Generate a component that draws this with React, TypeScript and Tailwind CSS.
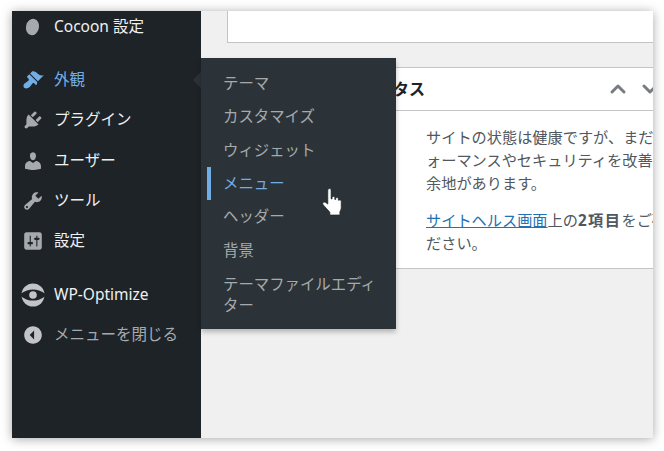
import { ChevronDown, ChevronUp } from 'lucide-react';

const font = { fontFamily: '"Noto Sans", "Noto Sans CJK JP", sans-serif' };

const paths = {
  brush:
    'M14.48 11.06L7.41 3.99l1.5-1.5c.5-.56 2.3-.47 3.51.32 1.21.8 1.43 1.28 2.91 2.1 1.18.64 2.45 1.26 4.45.85zm-.71.71L6.7 4.7 4.93 6.47c-.39.39-.39 1.02 0 1.41l1.06 1.06c.39.39.39 1.03 0 1.42-.6.6-1.43 1.11-2.21 1.69-.35.26-.7.53-1.01.84C1.43 13.23.78 15.78 2 17s3.77.57 5.12-.77c.31-.31.58-.66.84-1.01.58-.78 1.09-1.61 1.69-2.21.39-.39 1.03-.39 1.42 0l1.06 1.06c.39.39 1.02.39 1.41 0z',
  plugin:
    'M13.11 4.36L9.87 7.6 8 5.73l3.24-3.24c.35-.34 1.05-.2 1.56.32.52.51.66 1.21.31 1.55zm-8 1.77l.91-1.12 9.01 9.01-1.19.84c-.71.71-2.63 1.16-3.82 1.16H6.14L4.9 17.26c-.59.59-1.54.59-2.12 0-.59-.58-.59-1.53 0-2.12l1.24-1.24v-3.88c0-1.13.4-3.19 1.09-3.89zm7.26 3.97l3.24-3.24c.34-.35 1.04-.21 1.55.31.52.51.66 1.21.31 1.55l-3.24 3.25z',
  user:
    'M10 9.25c-2.27 0-2.73-3.44-2.73-3.44C7 4.02 7.82 2 9.97 2c2.16 0 2.98 2.02 2.71 3.81 0 0-.41 3.44-2.68 3.44zm0 2.57L12.72 10c2.39 0 4.52 2.33 4.52 4.53v2.49s-3.65 1.13-7.24 1.13c-3.65 0-7.24-1.13-7.24-1.13v-2.49c0-2.25 1.94-4.48 4.47-4.48z',
  tool:
    'M16.68 9.77c-1.34 1.34-3.3 1.67-4.95.99l-5.41 6.52c-.99.99-2.59.99-3.58 0s-.99-2.59 0-3.57l6.52-5.42c-.68-1.65-.35-3.61.99-4.95 1.28-1.28 3.12-1.62 4.72-1.06l-2.89 2.89 2.82 2.82 2.86-2.87c.53 1.58.18 3.39-1.08 4.65zM3.81 16.21c.4.39 1.04.39 1.43 0 .4-.4.4-1.04 0-1.43-.39-.4-1.03-.4-1.43 0-.39.39-.39 1.03 0 1.43z',
  settings:
    'M18 16V4c0-1.1-.9-2-2-2H4c-1.1 0-2 .9-2 2v12c0 1.1.9 2 2 2h12c1.1 0 2-.9 2-2zM8 11h1c.55 0 1 .45 1 1s-.45 1-1 1H8v1.5c0 .28-.22.5-.5.5s-.5-.22-.5-.5V13H6c-.55 0-1-.45-1-1s.45-1 1-1h1V5.5c0-.28.22-.5.5-.5s.5.22.5.5V11zm5-2h-1c-.55 0-1-.45-1-1s.45-1 1-1h1V5.5c0-.28.22-.5.5-.5s.5.22.5.5V7h1c.55 0 1 .45 1 1s-.45 1-1 1h-1v5.5c0 .28-.22.5-.5.5s-.5-.22-.5-.5V9z',
  collapse: 'M10 2.01c4.42 0 8 3.58 8 8s-3.58 8-8 8-8-3.58-8-8 3.58-8 8-8zm1 4v8l-4-4z',
};

const DashIcon = ({ d, className }: { d: string; className: string }) => (
  <svg viewBox="0 0 20 20" className={`h-[22px] w-[22px] ${className}`} fill="currentColor" fillRule="evenodd">
    <path d={d} />
  </svg>
);

const OptimizeIcon = () => (
  <svg viewBox="0 0 24 24" className="h-[24px] w-[24px] text-[#c3c4c7]" fill="currentColor">
    <circle cx="12" cy="12" r="11.500" />
    <path d="M-1 11.300 Q 12 1.500 25 11.300 L 25 12.700 Q 12 22.500 -1 12.700 Z" fill="#1d2327" />
    <circle cx="12" cy="12" r="3.800" />
  </svg>
);

const MarkerIcon = () => (
  <svg viewBox="0 0 22 22" className="h-[22px] w-[22px] text-[#a7aaad]" fill="currentColor">
    <ellipse cx="10.500" cy="11" rx="6.500" ry="8.300" transform="rotate(12 10.500 11)" />
  </svg>
);

const MenuRow = ({
  icon,
  label,
  className = 'text-[#f0f0f1]',
}: {
  icon: React.ReactNode;
  label: string;
  className?: string;
}) => (
  <div className={`flex h-10 items-center text-[15.5px] ${className}`}>
    <div className="flex w-[42px] justify-center">{icon}</div>
    <span className="whitespace-nowrap">{label}</span>
  </div>
);

const subItems = ['テーマ', 'カスタマイズ', 'ウィジェット', 'メニュー', 'ヘッダー', '背景'];

export default function App() {
  return (
    <div className="h-[451px] w-[664px] overflow-hidden bg-white pl-3 pt-[11px]" style={font}>
      <div className="relative flex h-[427px] w-[641px] bg-[#f0f0f1] shadow-[0_1px_10px_rgba(0,0,0,0.35)]">
        {/* Sidebar */}
        <div className="flex w-[189px] flex-col bg-[#1d2327]">
          <div className="-mt-1 mb-[13px]">
            <MenuRow icon={<MarkerIcon />} label="Cocoon 設定" />
          </div>
          <MenuRow icon={<DashIcon d={paths.brush} className="text-[#72aee6]" />} label="外観" className="text-[#72aee6]" />
          <MenuRow icon={<DashIcon d={paths.plugin} className="text-[#a7aaad]" />} label="プラグイン" />
          <div className="mt-px">
            <MenuRow icon={<DashIcon d={paths.user} className="text-[#a7aaad]" />} label="ユーザー" />
          </div>
          <MenuRow icon={<DashIcon d={paths.tool} className="text-[#a7aaad]" />} label="ツール" />
          <MenuRow icon={<DashIcon d={paths.settings} className="text-[#a7aaad]" />} label="設定" />
          <div className="mt-[14px]">
            <MenuRow icon={<OptimizeIcon />} label="WP-Optimize" />
          </div>
          <MenuRow icon={<DashIcon d={paths.collapse} className="text-[#c3c4c7]" />} label="メニューを閉じる" className="text-[#a7aaad]" />
        </div>

        {/* Content */}
        <div className="min-w-0 flex-1 overflow-hidden pl-[26px]">
          <div className="h-[32px] w-[480px] border-x border-b border-[#c3c4c7] bg-white" />
          <div className="mt-[24px] w-[480px] border border-[#c3c4c7] bg-white">
            <div className="flex h-[43px] items-center border-b border-[#c3c4c7] pl-[21px] pr-0 text-[16px] font-bold text-[#1d2327]">
              <span className="whitespace-nowrap">サイトヘルスステータス</span>
              <ChevronUp className="ml-[181px] h-6 w-6 shrink-0 text-[#787c82]" strokeWidth={3} />
              <ChevronDown className="ml-2 h-6 w-6 shrink-0 text-[#787c82]" strokeWidth={3} />
            </div>
            <div className="h-[157px] pl-[198px] pt-[15px] text-[15.200px] leading-[23px] text-[#50575e]">
              <p className="whitespace-nowrap">サイトの状態は健康ですが、まだパフ</p>
              <p className="whitespace-nowrap">ォーマンスやセキュリティを改善する</p>
              <p className="whitespace-nowrap">余地があります。</p>
              <p className="mt-[14px] whitespace-nowrap">
                <span className="text-[#2271b1] underline">サイトヘルス画面</span>上の<b className="tracking-[1.5px]">2項目</b>をご確認く
              </p>
              <p className="whitespace-nowrap">ださい。</p>
            </div>
          </div>
        </div>

        {/* Flyout */}
        <div className="absolute left-[181px] top-[61px] h-0 w-0 border-y-[8px] border-r-[8px] border-y-transparent border-r-[#2c3338]" />
        <div className="absolute left-[189px] top-[47px] w-[195px] bg-[#2c3338] pb-[13px] pt-[8.6px] text-[15.400px] text-[#a7aaad] shadow-[0_3px_5px_rgba(0,0,0,0.25)]">
          {subItems.map((item) => (
            <div
              key={item}
              className={`ml-[6px] flex h-[33.4px] items-center border-l-4 pl-[12px] ${
                item === 'メニュー' ? 'border-[#72aee6] text-[#72aee6]' : 'border-transparent'
              }`}
            >
              {item}
            </div>
          ))}
          <div className="ml-[22px] pr-3 pt-[7px] leading-[21px]">テーマファイルエディター</div>
        </div>

        {/* Cursor */}
        <svg viewBox="0 0 20 28" className="absolute left-[310px] top-[176px] h-[29px] w-[21px]">
          <path
            d="M6 2c1-1.2 2.6-.6 2.6 1v8.5l1 .1V9.8c.8-1 2.2-.9 2.6.2v2l.9.1v-1.3c.8-.9 2.1-.8 2.5.3v1.6l.8.1c.8-.5 1.9-.1 2 1V20c0 1.5-.6 2.6-1.3 3.8V27H7.5v-2.6C5.5 22 2.800 19.500 .9 17c-.9-1.300.5-3 2-2.200L5.500 16.500V3z"
            fill="#fff"
            stroke="#1d2327"
            strokeWidth="0.6"
          />
        </svg>
      </div>
    </div>
  );
}
